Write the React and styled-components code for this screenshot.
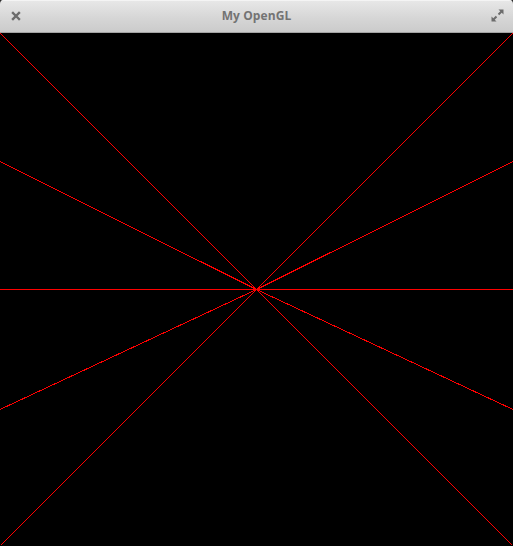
import React from 'react';
import styled, { createGlobalStyle } from 'styled-components';

const Global = createGlobalStyle`
    html, body {
        margin: 0;
        padding: 0;
        background: #2b2b2b;
    }
`;

const Window = styled.div`
    width: 513px;
    height: 546px;
    display: flex;
    flex-direction: column;
    border-radius: 4px 4px 0 0;
    overflow: hidden;
    font-family: "Open Sans", "Liberation Sans", sans-serif;
`;

const TitleBar = styled.div`
    height: 33px;
    flex: none;
    display: flex;
    align-items: center;
    justify-content: space-between;
    padding: 0 9px 1px 9px;
    box-sizing: border-box;
    background: linear-gradient(#e8e8e8, #d5d5d5 60%, #cbcbcb);
    border-bottom: 1px solid #a4a4a4;
    box-shadow: inset 0 1px 0 #f4f4f4;
`;

const Title = styled.div`
    font-size: 12px;
    font-weight: 700;
    color: #737373;
    letter-spacing: 0.1px;
`;

const IconBtn = styled.div`
    width: 14px;
    height: 14px;
    display: flex;
    align-items: center;
    justify-content: center;
`;

const Canvas = styled.div`
    flex: 1;
    background: #000;
    display: flex;
`;

const red = '#ff0000';

// 1px aliased lines, like a GL_LINES draw without smoothing
// each line is drawn from the centre out to the edges
const cx = 256.5;
const cy = 256.5;
const ends = [
    [0.5, 0.5], [512.5, 512.5],
    [512.5, 0.5], [0.5, 512.5],
    [0, 256.5], [513, 256.5],
    [0, 128.5], [513, 376.5],
    [0, 376.5], [513, 128.5],
];

const Scene = () => (
    <svg width="513" height="513" viewBox="0 0 513 513" shapeRendering="crispEdges">
        {ends.map(([x, y], i) => (
            <line key={i} x1={cx} y1={cy} x2={x} y2={y} stroke={red} strokeWidth="1" />
        ))}
    </svg>
);

export default function App() {
    return (
        <Window>
            <Global />
            <TitleBar>
                <IconBtn>
                    <svg width="10" height="10" viewBox="0 0 10 10">
                        <path d="M2 2 L8 8 M8 2 L2 8" stroke="#6c6c6c" strokeWidth="2.4" strokeLinecap="square" />
                    </svg>
                </IconBtn>
                <Title>My OpenGL</Title>
                <IconBtn>
                    <svg width="13" height="13" viewBox="0 0 13 13">
                        <path d="M7.5 0.5 H12.5 V5.5 Z" fill="#6c6c6c" />
                        <path d="M0.5 7.5 V12.5 H5.5 Z" fill="#6c6c6c" />
                        <path d="M10.5 2.5 L7.5 5.5 M2.5 10.5 L5.5 7.5" stroke="#6c6c6c" strokeWidth="2" />
                    </svg>
                </IconBtn>
            </TitleBar>
            <Canvas>
                <Scene />
            </Canvas>
        </Window>
    );
}
